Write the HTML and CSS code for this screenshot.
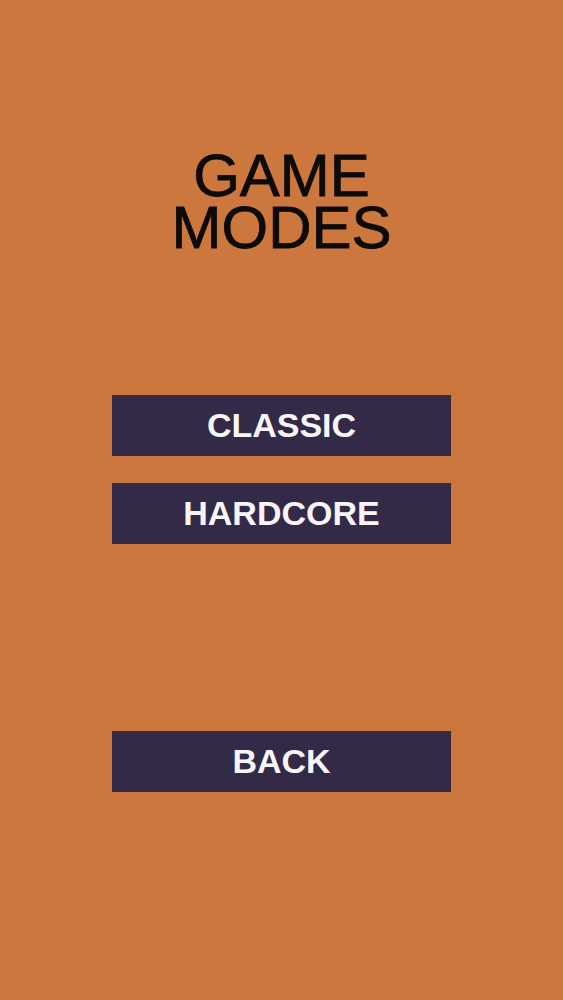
FILE: index.html
```html
<!DOCTYPE html>
<html>
<head>
<meta charset="utf-8">
<link rel="stylesheet" href="styles.css">
</head>
<body>
<main class="screen">
  <h1 class="title"><span class="title-line">GAME</span><span class="title-line">MODES</span></h1>
  <nav class="modes">
    <button class="btn">CLASSIC</button>
    <button class="btn">HARDCORE</button>
  </nav>
  <div class="footer">
    <button class="btn">BACK</button>
  </div>
</main>
</body>
</html>
```
FILE: styles.css
```css
html, body {
  margin: 0;
  padding: 0;
}
body {
  background: #cc773d;
  width: 563px;
  height: 1000px;
  overflow: hidden;
  font-family: "Liberation Sans", Arial, sans-serif;
}
.screen {
  display: flex;
  flex-direction: column;
  align-items: center;
  padding-top: 150px;
}
.title {
  margin: 0;
  display: flex;
  flex-direction: column;
  align-items: center;
  font-size: 60px;
  font-weight: normal;
  color: #0d0b0a;
  text-align: center;
  -webkit-text-stroke: 0.8px #0d0b0a;
}
.title-line {
  display: block;
  height: 52px;
  line-height: 52px;
}
.modes {
  display: flex;
  flex-direction: column;
  gap: 27px;
  margin-top: 141px;
}
.footer {
  margin-top: 187px;
}
.btn {
  display: flex;
  align-items: center;
  justify-content: center;
  width: 339px;
  height: 61px;
  margin: 0;
  padding: 0;
  border: none;
  background: #332a48;
  color: #f7f5f8;
  font-family: "Liberation Sans", Arial, sans-serif;
  font-weight: bold;
  font-size: 34px;
}
```
